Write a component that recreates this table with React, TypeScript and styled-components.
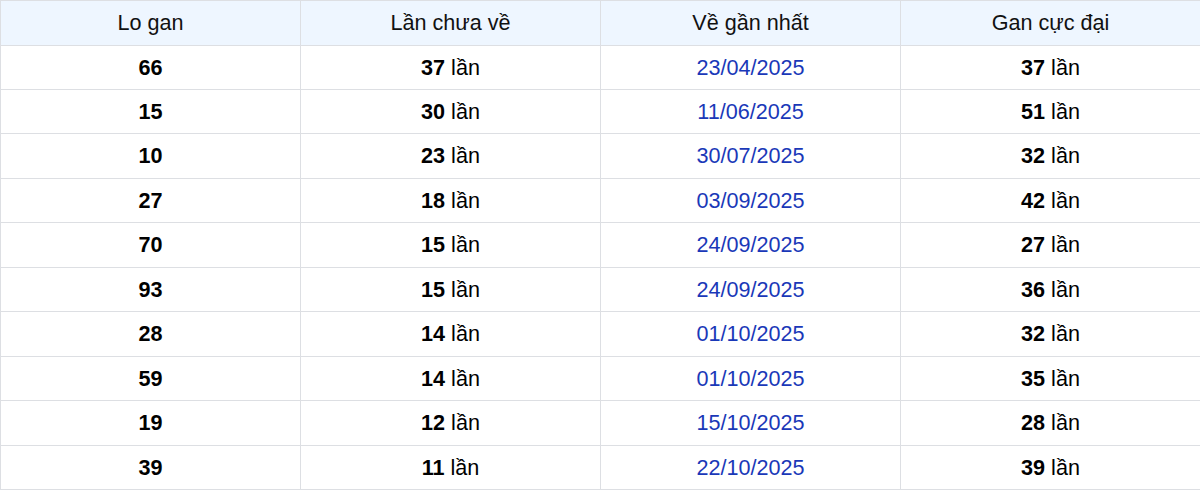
import React from "react";
import styled, { createGlobalStyle } from "styled-components";

const GlobalStyle = createGlobalStyle`
  html, body {
    margin: 0;
    padding: 0;
    background: #ffffff;
    overflow: hidden;
  }
  body {
    font-family: "Liberation Sans", Arial, sans-serif;
  }
`;

const Table = styled.table`
  width: 1201px;
  border-collapse: collapse;
  table-layout: fixed;
  font-family: "Liberation Sans", Arial, sans-serif;
  font-size: 21.6px;
  color: #000;
`;

const HeadCell = styled.th`
  background: #eef6ff;
  font-weight: 400;
  color: #111;
  padding: 10px;
  text-align: center;
  border: 1px solid #dddfe3;
  line-height: 23.5px;
`;

const Cell = styled.td<{ $date?: boolean }>`
  padding: 10px;
  text-align: center;
  border: 1px solid #dddfe3;
  line-height: 23.45px;
  color: ${(p) => (p.$date ? "#1a38b8" : "#000")};
`;

const Num = styled.b`
  font-weight: 700;
`;

const rows = [
  ["66", "37", "23/04/2025", "37"],
  ["15", "30", "11/06/2025", "51"],
  ["10", "23", "30/07/2025", "32"],
  ["27", "18", "03/09/2025", "42"],
  ["70", "15", "24/09/2025", "27"],
  ["93", "15", "24/09/2025", "36"],
  ["28", "14", "01/10/2025", "32"],
  ["59", "14", "01/10/2025", "35"],
  ["19", "12", "15/10/2025", "28"],
  ["39", "11", "22/10/2025", "39"],
];

export default function App() {
  return (
    <>
      <GlobalStyle />
      <Table>
        <thead>
          <tr>
            <HeadCell>Lo gan</HeadCell>
            <HeadCell>Lần chưa về</HeadCell>
            <HeadCell>Về gần nhất</HeadCell>
            <HeadCell>Gan cực đại</HeadCell>
          </tr>
        </thead>
        <tbody>
          {rows.map((r, i) => (
            <tr key={i}>
              <Cell>
                <Num>{r[0]}</Num>
              </Cell>
              <Cell>
                <Num>{r[1]}</Num> lần
              </Cell>
              <Cell $date>{r[2]}</Cell>
              <Cell>
                <Num>{r[3]}</Num> lần
              </Cell>
            </tr>
          ))}
        </tbody>
      </Table>
    </>
  );
}
